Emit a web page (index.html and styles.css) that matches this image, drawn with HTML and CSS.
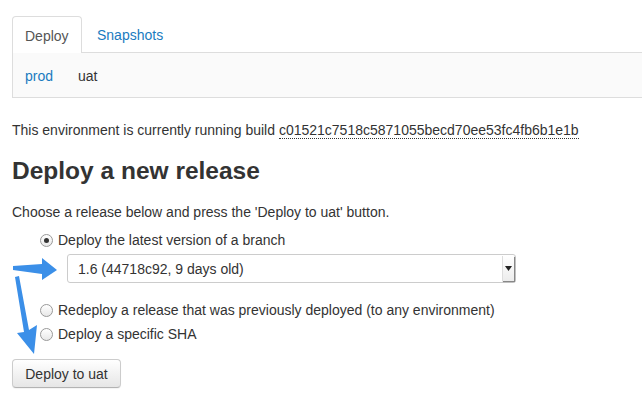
FILE: index.html
```html
<!DOCTYPE html>
<html>
<head>
<meta charset="utf-8">
<link rel="stylesheet" href="styles.css">
</head>
<body>
<div class="page">
  <div class="tabs">
    <div class="tab active">Deploy</div>
    <div class="tab link">Snapshots</div>
    <div class="tab-fill"></div>
  </div>
  <div class="envbar">
    <span class="env link">prod</span>
    <span class="env">uat</span>
  </div>
  <p class="status">This environment is currently running build <span class="sha">c01521c7518c5871055becd70ee53fc4fb6b1e1b</span></p>
  <h1 class="title">Deploy a new release</h1>
  <p class="intro">Choose a release below and press the 'Deploy to uat' button.</p>
  <div class="options">
    <div class="opt"><span class="radio checked"></span>Deploy the latest version of a branch</div>
    <div class="select"><span class="select-text">1.6 (44718c92, 9 days old)</span><span class="select-btn"><svg width="7" height="5" viewBox="0 0 7 5"><path d="M0 0H7L3.5 5Z" fill="#222"/></svg></span></div>
    <div class="opt opt2"><span class="radio"></span>Redeploy a release that was previously deployed (to any environment)</div>
    <div class="opt opt3"><span class="radio"></span>Deploy a specific SHA</div>
  </div>
  <button class="btn">Deploy to uat</button>
  <svg class="arrows" width="70" height="120" viewBox="0 0 70 120">
    <path d="M13 21 L42 19 L42 13 L57 25 L42 35 L42 29 L13 25 Z" fill="#3b8fe8"/>
    <path d="M15 32 L19 31 L29 85 L37 80 L34 109 L17 88 L24 87 Z" fill="#3b8fe8"/>
  </svg>
</div>
</body>
</html>
```
FILE: styles.css
```css
html, body { margin: 0; padding: 0; background: #fff; }
body { font-family: "Liberation Sans", Arial, sans-serif; font-size: 14px; color: #333; }
.page { position: relative; padding: 16px 0 0 12px; width: 630px; overflow: hidden; height: 394px; }
.link { color: #1a7bc0; }
.tabs { display: flex; height: 37px; }
.tab { padding: 0 12px; line-height: 37px; font-size: 14px; }
.tab.active { border: 1px solid #ddd; border-bottom: none; border-radius: 4px 4px 0 0; background: #fff; color: #555; padding: 0 12px; height: 37px; box-sizing: border-box; line-height: 38px; width: 70px; }
.tab.link { padding-left: 15px; line-height: 38px; border-bottom: 1px solid #ddd; box-sizing: border-box; }
.tab-fill { flex: 1; border-bottom: 1px solid #ddd; }
.envbar { height: 44px; background: #fafafa; border-left: 1px solid #ddd; border-bottom: 1px solid #ddd; display: flex; align-items: center; padding-left: 12px; gap: 25px; font-size: 14px; margin-top: -1px; border-top: 1px solid transparent; }
.envbar .env { position: relative; top: 1px; }
.status { margin: 23px 0 0; font-size: 14px; line-height: 18px; }
.sha { border-bottom: 1px dotted #333; }
.title { margin: 17px 0 0; font-size: 24.5px; font-weight: bold; color: #333; line-height: 30px; }
.intro { margin: 17px 0 0; font-size: 14px; line-height: 18px; }
.options { margin: 10px 0 0 28px; }
.opt { display: flex; align-items: center; font-size: 14px; line-height: 18px; height: 18px; }
.radio { width: 13px; height: 13px; border: 1px solid #999; border-radius: 50%; box-sizing: border-box; margin-right: 5px; background: linear-gradient(#fff, #e8e8e8); position: relative; flex: none; }
.radio.checked::after { content: ""; position: absolute; width: 5px; height: 5px; border-radius: 50%; background: #333; left: 3px; top: 3px; }
.select { margin: 5px 0 0 27px; width: 449px; height: 29px; border: 1px solid #ccc; border-radius: 3px; box-sizing: border-box; display: flex; align-items: center; background: #fff; }
.select-text { flex: 1; padding-left: 10px; font-size: 14px; color: #333; }
.select-btn { width: 11px; height: 25px; margin-right: 1px; border-left: 1px solid #ddd; display: flex; align-items: center; justify-content: center; background: linear-gradient(#fff, #ececec); box-shadow: 1px 1px 1px #888; }
.opt2 { margin-top: 18px; }
.opt3 { margin-top: 6px; }
.btn { margin-top: 16px; width: 109px; height: 29px; border: 1px solid #ccc; border-bottom-color: #b3b3b3; border-radius: 4px; background: linear-gradient(#ffffff, #e6e6e6); font-family: "Liberation Sans", Arial, sans-serif; font-size: 14px; color: #333; box-shadow: 0 1px 1px rgba(0,0,0,0.05); padding: 0; }
.arrows { position: absolute; left: 0; top: 245px; }
```
